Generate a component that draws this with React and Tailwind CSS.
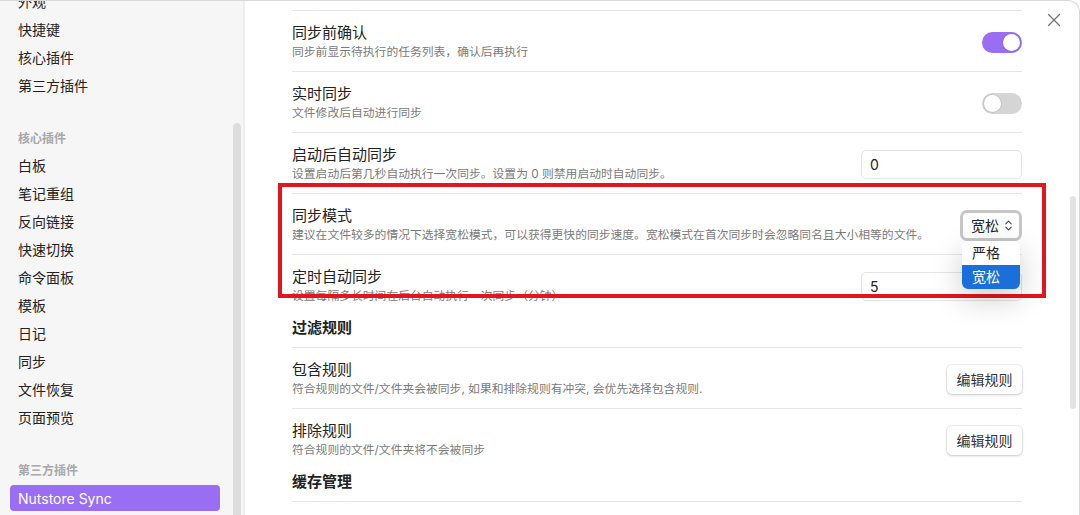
import React from 'react';
import { X, ChevronsUpDown } from 'lucide-react';

const font = { fontFamily: '"Inter", "Noto Sans CJK SC", sans-serif' };

const Toggle = ({ on }) => (
  <div
    className={
      'w-[40px] h-[21px] rounded-full flex items-center px-[2px] ' +
      (on ? 'bg-[#9a6ef2] justify-end' : 'bg-[#d5d5d5] justify-start')
    }
  >
    <div className="w-[17px] h-[17px] rounded-full bg-white shadow-[0_0_0_1px_rgba(0,0,0,0.08)]" />
  </div>
);

const TextInput = ({ value }) => (
  <div className="w-[161px] h-[29px] rounded-[5px] border border-[#e4e4e4] bg-white flex items-center px-[8px] text-[14px] text-[#222]">
    {value}
  </div>
);

const Button = ({ children }) => (
  <div className="h-[29px] w-[75px] rounded-[5px] bg-white flex items-center justify-center text-[14px] text-[#333] shadow-[0_1px_3px_rgba(0,0,0,0.18),0_0_0_1px_rgba(0,0,0,0.05)]">
    {children}
  </div>
);

const ModeSelect = () => (
  <div className="relative">
    <div className="w-[62px] h-[31px] rounded-[7px] border-[3px] border-[#c6c6c6] bg-white flex items-center pl-[8px] pr-[4px] justify-between text-[14px] text-[#222]">
      <span>宽松</span>
      <ChevronsUpDown size={13} strokeWidth={2} color="#444" />
    </div>
    <div className="absolute left-[2px] top-[31px] w-[58px] bg-white rounded-[6px] overflow-hidden shadow-[0_10px_30px_rgba(0,0,0,0.2)] text-[14px] z-10">
      <div className="h-[24px] flex items-center pl-[10px] text-[#222]">严格</div>
      <div className="h-[24px] flex items-center pl-[10px] bg-[#1b6fd8] text-white">宽松</div>
    </div>
  </div>
);

const Row = ({ title, desc, control, noBorder }) => (
  <div className={'flex items-center justify-between pt-[12px] pb-[10px] ' + (noBorder ? '' : 'border-t border-[#e6e6e6]')}>
    <div>
      <div className="text-[15px] leading-[20px] text-[#222]">{title}</div>
      <div className="text-[11.8px] leading-[18px] text-[#7a7a7a]">{desc}</div>
    </div>
    {control}
  </div>
);

const Heading = ({ children }) => (
  <div className="text-[15px] leading-[20px] font-bold text-[#222] pt-[3px] pb-[9px] border-b border-[#e6e6e6]">
    {children}
  </div>
);

const NavItem = ({ children, active }) => (
  <div
    className={
      'flex items-center pl-[8px] text-[14px] rounded-[4px] ' +
      (active ? 'h-[26px] mt-[2px] bg-[#9a6ef2] text-white' : 'h-[28px] text-[#222]')
    }
  >
    {children}
  </div>
);

const NavHeader = ({ children }) => (
  <div className="h-[28px] mt-[24px] pt-[4px] flex items-center pl-[8px] text-[12px] font-bold text-[#a8a8a8]">
    {children}
  </div>
);

const App = () => {
  return (
    <div
      className="relative w-[1080px] h-[515px] overflow-hidden flex bg-white border-t border-r border-[#d9d9d9] rounded-tr-[12px]"
      style={font}
    >
      {/* sidebar */}
      <div className="w-[245px] shrink-0 h-full flex bg-[#f6f6f6] border-r-2 border-[#eeeeee]">
        <div className="w-[220px] pl-[10px] -mt-[14px]">
          <NavItem>外观</NavItem>
          <NavItem>快捷键</NavItem>
          <NavItem>核心插件</NavItem>
          <NavItem>第三方插件</NavItem>
          <NavHeader>核心插件</NavHeader>
          <NavItem>白板</NavItem>
          <NavItem>笔记重组</NavItem>
          <NavItem>反向链接</NavItem>
          <NavItem>快速切换</NavItem>
          <NavItem>命令面板</NavItem>
          <NavItem>模板</NavItem>
          <NavItem>日记</NavItem>
          <NavItem>同步</NavItem>
          <NavItem>文件恢复</NavItem>
          <NavItem>页面预览</NavItem>
          <NavHeader>第三方插件</NavHeader>
          <NavItem active>Nutstore Sync</NavItem>
        </div>
        <div className="flex-1" />
        <div className="w-[8px] mr-[2px] pt-[122px] h-full flex flex-col">
          <div className="flex-1 rounded-t-[4px] bg-[#dddddd]" />
        </div>
      </div>

      {/* content */}
      <div className="flex-1 h-full flex">
        <div className="pl-[47px] pt-[9px] w-[777px]">
          <div className="w-[730px]">
            <Row
              title="同步前确认"
              desc="同步前显示待执行的任务列表，确认后再执行"
              control={<Toggle on />}
            />
            <Row title="实时同步" desc="文件修改后自动进行同步" control={<Toggle />} />
            <Row
              title="启动后自动同步"
              desc="设置启动后第几秒自动执行一次同步。设置为 0 则禁用启动时自动同步。"
              control={<TextInput value="0" />}
            />
            <Row
              title="同步模式"
              desc="建议在文件较多的情况下选择宽松模式，可以获得更快的同步速度。宽松模式在首次同步时会忽略同名且大小相等的文件。"
              control={<ModeSelect />}
            />
            <Row
              title="定时自动同步"
              desc="设置每隔多长时间在后台自动执行一次同步（分钟）"
              control={<TextInput value="5" />}
            />
            <Heading>过滤规则</Heading>
            <Row
              noBorder
              title="包含规则"
              desc="符合规则的文件/文件夹会被同步, 如果和排除规则有冲突, 会优先选择包含规则."
              control={<Button>编辑规则</Button>}
            />
            <Row
              title="排除规则"
              desc="符合规则的文件/文件夹将不会被同步"
              control={<Button>编辑规则</Button>}
            />
            <Heading>缓存管理</Heading>
          </div>
        </div>
        <div className="flex-1" />
        <div className="w-[6px] mr-[3px] pt-[195px]">
          <div className="h-[213px] rounded-full bg-[#e3e3e3]" />
        </div>
      </div>

      {/* close */}
      <div className="absolute top-[8px] right-[14px] text-[#777]">
        <X size={22} strokeWidth={1.5} />
      </div>

      {/* red annotation box */}
      <div className="absolute left-[278px] top-[182px] w-[768px] h-[115px] border-4 border-[#e5151d] pointer-events-none" />
    </div>
  );
};

export default App;
